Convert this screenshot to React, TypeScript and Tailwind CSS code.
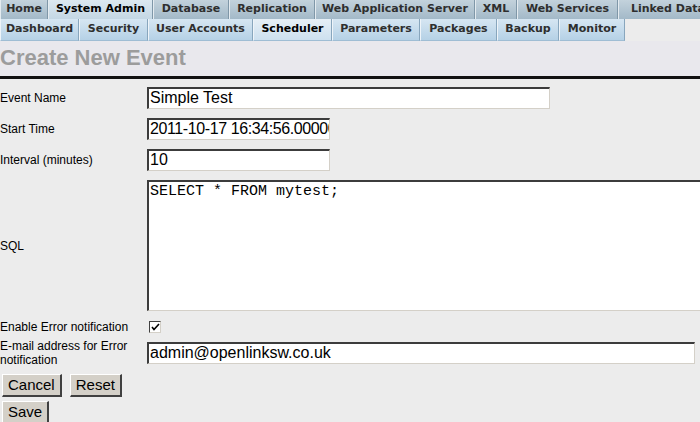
import React from "react";

const topTabs = [
  { label: "Home", w: 48 },
  { label: "System Admin", w: 105, active: true },
  { label: "Database", w: 76 },
  { label: "Replication", w: 86 },
  { label: "Web Application Server", w: 160 },
  { label: "XML", w: 42 },
  { label: "Web Services", w: 101 },
  { label: "Linked Data", w: 100 },
];

const subTabs = [
  { label: "Dashboard", w: 79 },
  { label: "Security", w: 69 },
  { label: "User Accounts", w: 105 },
  { label: "Scheduler", w: 79, active: true },
  { label: "Parameters", w: 88 },
  { label: "Packages", w: 77 },
  { label: "Backup", w: 62 },
  { label: "Monitor", w: 66 },
];

const inset =
  "border-t-2 border-l-2 border-b border-r border-t-[#3c3c3c] border-l-[#3c3c3c] border-b-[#d4d0c8] border-r-[#d4d0c8] bg-white";

const btn =
  "h-[23px] px-[5px] text-[15px] leading-[18px] bg-[#d4d0c8] border-t border-l border-b-2 border-r-2 border-t-white border-l-white border-b-[#404040] border-r-[#404040]";

function Label({ children }: { children: React.ReactNode }) {
  return <div className="w-[147px] shrink-0 text-[12px] leading-[14px] text-black">{children}</div>;
}

export default function App() {
  return (
    <div className="w-[700px] h-[422px] overflow-hidden bg-[#ececec] font-['Liberation_Sans',Arial,sans-serif]">
      {/* top menu */}
      <div className="flex h-[19px] bg-gradient-to-b from-[#c3d2dc] to-[#a3b9c8] font-['DejaVu_Sans',sans-serif] text-[11px] font-bold">
        {topTabs.map((t) => (
          <div
            key={t.label}
            style={{ width: t.w }}
            className={`shrink-0 flex items-center justify-center whitespace-nowrap border-l border-r border-l-[#e4ebf0] border-r-[#7f97a8] ${
              t.active
                ? "bg-gradient-to-b from-[#dce8f0] to-[#c4d7e4] text-black"
                : "bg-gradient-to-b from-[#c3d2dc] to-[#a3b9c8] text-[#2e2e2e]"
            }`}
          >
            {t.label}
          </div>
        ))}
      </div>
      <div className="flex h-[22px] font-['DejaVu_Sans',sans-serif] text-[11px] font-bold">
        {subTabs.map((t) => (
          <div
            key={t.label}
            style={{ width: t.w }}
            className={`shrink-0 flex items-center justify-center whitespace-nowrap border-l border-r border-b border-l-[#eef4f9] border-r-[#88a6bd] border-b-[#9fbdd4] ${
              t.active
                ? "bg-gradient-to-b from-[#e6eff6] to-[#cde0ef] text-black"
                : "bg-gradient-to-b from-[#d6e6f2] to-[#b5d1e6] text-[#2e2e2e]"
            }`}
          >
            {t.label}
          </div>
        ))}
      </div>

      {/* title */}
      <div className="h-[35px] pt-[3px] text-[22px] font-bold leading-[28px] text-[#9c9c9c] bg-[#e9e8ed]">
        Create New Event
      </div>
      <div className="h-[3px] bg-[#111]" />

      {/* form */}
      <div className="flex flex-col pt-[8px]">
        <div className="flex items-center h-[22px]">
          <Label>Event Name</Label>
          <div className={`w-[403px] h-[22px] ${inset} text-[16px] leading-[18px] pl-[1px]`}>Simple Test</div>
        </div>
        <div className="flex items-center h-[22px] mt-[9px]">
          <Label>Start Time</Label>
          <div className={`w-[183px] h-[22px] ${inset} text-[16px] leading-[18px] pl-[1px] tracking-[-0.4px] overflow-hidden whitespace-nowrap`}>
            2011-10-17 16:34:56.000000
          </div>
        </div>
        <div className="flex items-center h-[22px] mt-[9px]">
          <Label>Interval (minutes)</Label>
          <div className={`w-[183px] h-[22px] ${inset} text-[16px] leading-[18px] pl-[1px]`}>10</div>
        </div>
        <div className="flex items-center h-[131px] mt-[9px]">
          <Label>SQL</Label>
          <div
            className={`flex-1 h-[131px] ${inset} border-r-0 font-['Liberation_Mono','Courier_New',monospace] text-[15px] leading-[18px] pl-[1px] pt-[1px]`}
          >
            SELECT * FROM mytest;
          </div>
        </div>
        <div className="flex items-center h-[22px] mt-[5px]">
          <Label>Enable Error notification</Label>
          <div className="ml-[2px] w-[12px] h-[12px] border border-t-[#404040] border-l-[#404040] border-b-[#d4d0c8] border-r-[#d4d0c8] bg-white flex items-center justify-center">
            <svg width="9" height="9" viewBox="0 0 9 9">
              <path d="M1 4 L3 6.5 L8 1" fill="none" stroke="#000" strokeWidth="1.6" />
            </svg>
          </div>
        </div>
        <div className="flex items-center h-[28px] mt-[1px]">
          <Label>E-mail address for Error notification</Label>
          <div className={`w-[548px] h-[22px] ${inset} text-[16px] leading-[18px] pl-[1px]`}>admin@openlinksw.co.uk</div>
        </div>
        <div className="flex gap-[8px] pl-[2px] mt-[7px]">
          <button className={btn}>Cancel</button>
          <button className={btn}>Reset</button>
        </div>
        <div className="flex pl-[2px] mt-[4px]">
          <button className={btn}>Save</button>
        </div>
      </div>
    </div>
  );
}
